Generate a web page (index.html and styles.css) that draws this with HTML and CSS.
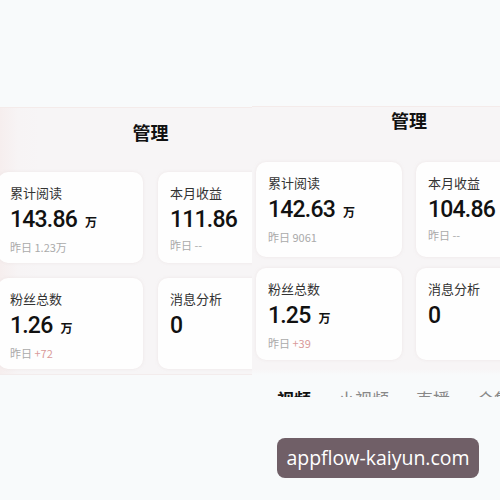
FILE: index.html
```html
<!DOCTYPE html>
<html lang="zh">
<head>
<meta charset="utf-8">
<link rel="stylesheet" href="styles.css">
</head>
<body>
<div class="stage">
  <section class="shot shot-left">
    <div class="screen">
      <h1 class="title">管理</h1>
      <div class="grid">
        <div class="card">
          <div class="label">累计阅读</div>
          <div class="value">143.86<span class="unit">万</span></div>
          <div class="sub">昨日 1.23万</div>
        </div>
        <div class="card">
          <div class="label">本月收益</div>
          <div class="value">111.86</div>
          <div class="sub">昨日 --</div>
        </div>
        <div class="card">
          <div class="label">粉丝总数</div>
          <div class="value">1.26<span class="unit">万</span></div>
          <div class="sub">昨日 <span class="up">+72</span></div>
        </div>
        <div class="card">
          <div class="label">消息分析</div>
          <div class="value">0</div>
        </div>
      </div>
    </div>
  </section>

  <section class="shot shot-right">
    <div class="screen">
      <h1 class="title">管理</h1>
      <div class="grid">
        <div class="card">
          <div class="label">累计阅读</div>
          <div class="value">142.63<span class="unit">万</span></div>
          <div class="sub">昨日 9061</div>
        </div>
        <div class="card">
          <div class="label">本月收益</div>
          <div class="value">104.86</div>
          <div class="sub">昨日 --</div>
        </div>
        <div class="card">
          <div class="label">粉丝总数</div>
          <div class="value">1.25<span class="unit">万</span></div>
          <div class="sub">昨日 <span class="up">+39</span></div>
        </div>
        <div class="card">
          <div class="label">消息分析</div>
          <div class="value">0</div>
        </div>
      </div>
      <div class="tabs">
        <span class="tab active">视频</span>
        <span class="tab">小视频</span>
        <span class="tab">直播</span>
        <span class="tab">合集</span>
      </div>
    </div>
  </section>

  <div class="watermark">appflow-kaiyun.com</div>
</div>
</body>
</html>
```

FILE: styles.css
```css
* { box-sizing: border-box; margin: 0; padding: 0; }

html, body {
  width: 500px;
  height: 500px;
  overflow: hidden;
  background: #f8fafb;
  font-family: "Noto Sans CJK SC", "Noto Sans", sans-serif;
}

.stage {
  position: relative;
  width: 500px;
  height: 500px;
}

.shot {
  position: absolute;
  overflow: hidden;
  background: #f7f5f6;
  border-top: 1px solid #f4ebea;
}

.shot-left {
  left: 0;
  top: 107px;
  width: 252px;
  height: 268px;
  background: linear-gradient(90deg, #f6eeee 0, #f7f4f5 18px, #f7f5f6 40px);
  border-bottom: 1px solid #f3ecec;
}

.shot-left .screen {
  margin-left: -14px;
  width: 329px;
  padding: 0 12px;
}

.shot-left .title {
  padding-top: 11px;
  margin-bottom: 27px;
}

.shot-left .grid {
  grid-template-columns: 145px 145px;
  grid-auto-rows: 91px;
  column-gap: 15px;
  row-gap: 15px;
}

.shot-right {
  left: 252px;
  top: 106px;
  right: 0;
  bottom: 0;
  background: linear-gradient(180deg, #f7f5f6 0, #f7f5f6 262px, #f8fafb 268px);
}

.shot-right .screen {
  margin-left: -8px;
  width: 330px;
  padding: 0 12px;
}

.shot-right .title {
  padding-top: 0;
  margin-bottom: 29px;
}

.shot-right .grid {
  grid-template-columns: 146px 146px;
  grid-auto-rows: 95px 92px;
  column-gap: 14px;
  row-gap: 11px;
}

.title {
  text-align: center;
  font-size: 18px;
  line-height: 26px;
  font-weight: 700;
  color: #111;
}

.grid {
  display: grid;
}

.card {
  background: #fefefe;
  border-radius: 10px;
  padding: 13px 12px;
  box-shadow: 0 0 3px rgba(230, 215, 215, 0.5);
}

.label {
  font-size: 13px;
  line-height: 16px;
  color: #333;
}

.value {
  margin-top: 4px;
  font-family: Roboto, "Liberation Sans", sans-serif;
  font-weight: 500;
  font-size: 23px;
  line-height: 30px;
  letter-spacing: -0.8px;
  color: #111;
}

.unit {
  font-family: "Noto Sans CJK SC", sans-serif;
  font-size: 12px;
  font-weight: 700;
  margin-left: 8px;
  letter-spacing: 0;
}

.sub {
  margin-top: 2px;
  font-size: 11px;
  line-height: 16px;
  color: #aaa;
}

.up {
  color: #d99a9a;
}

.tabs {
  display: flex;
  margin-top: 29px;
  padding-left: 21px;
  height: 8px;
  overflow: hidden;
  gap: 27px;
}

.tab {
  font-size: 17px;
  line-height: 20px;
  color: #888;
  white-space: nowrap;
}

.tab.active {
  font-weight: 700;
  color: #111;
}

.watermark {
  position: absolute;
  left: 277px;
  top: 438px;
  width: 202px;
  height: 40px;
  border-radius: 8px;
  background: #705f67;
  color: #fff;
  font-family: "Open Sans", "Noto Sans", sans-serif;
  font-size: 19.5px;
  line-height: 40px;
  text-align: center;
}
```
